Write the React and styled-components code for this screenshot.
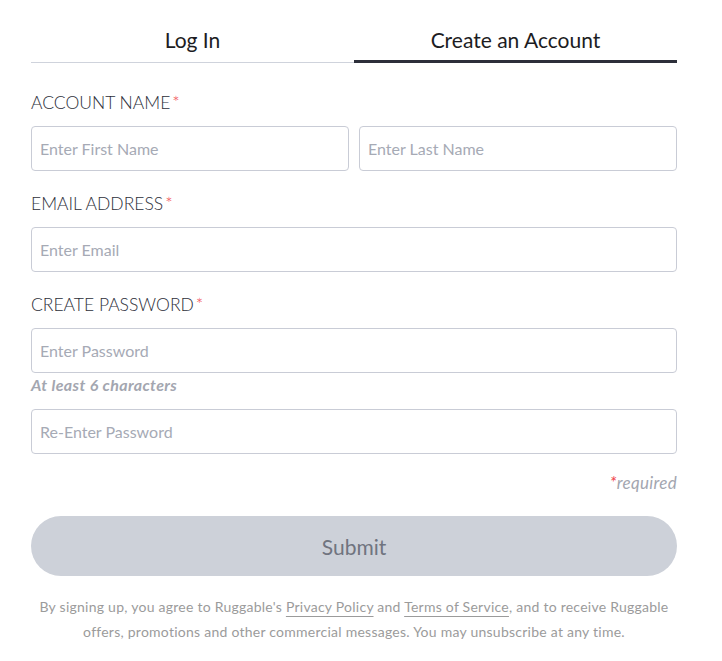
import styled, { createGlobalStyle } from "styled-components";

const GlobalStyle = createGlobalStyle`
  body {
    margin: 0;
    background: #fff;
    font-family: "Lato", "Noto Sans", sans-serif;
  }
`;

const Wrapper = styled.div`
  width: 646px;
  margin-left: 31px;
`;

const Tabs = styled.div`
  display: flex;
  align-items: flex-end;
  height: 63px;
`;

const Tab = styled.button`
  flex: 1;
  background: none;
  border: none;
  border-bottom: ${(p) => (p.active ? "3px solid #2d2f3a" : "1px solid #cfd3dc")};
  padding: 0 0 ${(p) => (p.active ? "8px" : "10px")};
  font-family: inherit;
  font-size: 21px;
  color: #1c1c22;
  cursor: pointer;
`;

const Label = styled.div`
  font-size: 17.5px;
  font-weight: 300;
  line-height: 24px;
  color: #2d2f3a;
  margin-top: ${(p) => p.top || 21}px;
  margin-bottom: 11px;
`;

const Star = styled.span`
  color: #f0454d;
  margin-left: 2px;
`;

const Row = styled.div`
  display: flex;
  gap: 10px;
`;

const Input = styled.input`
  box-sizing: border-box;
  width: 100%;
  height: 45px;
  border: 1px solid #c9ccd6;
  border-radius: 4px;
  padding: 0 8px;
  font-family: inherit;
  font-size: 16px;
  color: #2d2f3a;
  margin-top: ${(p) => p.top || 0}px;
  &::placeholder {
    color: #a6aab5;
  }
`;

const Hint = styled.div`
  font-size: 16px;
  font-style: italic;
  font-weight: 700;
  letter-spacing: 0.4px;
  line-height: 20px;
  color: #a3a6b0;
  margin-top: 2px;
`;

const Required = styled.div`
  text-align: right;
  font-size: 17px;
  font-style: italic;
  letter-spacing: 0.3px;
  line-height: 20px;
  color: #a3a6b0;
  margin-top: 19px;
`;

const Submit = styled.button`
  width: 100%;
  height: 60px;
  margin-top: 23px;
  border: none;
  border-radius: 30px;
  background: #cdd1d9;
  color: #70747f;
  font-family: inherit;
  font-size: 21px;
`;

const Legal = styled.p`
  margin: 18px 0 0;
  text-align: center;
  font-size: 14px;
  letter-spacing: 0.25px;
  line-height: 25px;
  color: #9b9b9b;
`;

const Link = styled.a`
  color: #9b9b9b;
  text-decoration: underline;
  text-underline-offset: 4px;
`;

export default function App() {
  return (
    <>
      <GlobalStyle />
      <Wrapper>
        <Tabs>
          <Tab>Log In</Tab>
          <Tab active>Create an Account</Tab>
        </Tabs>

        <Label top={28}>
          ACCOUNT NAME<Star>*</Star>
        </Label>
        <Row>
          <Input placeholder="Enter First Name" />
          <Input placeholder="Enter Last Name" />
        </Row>

        <Label>
          EMAIL ADDRESS<Star>*</Star>
        </Label>
        <Input placeholder="Enter Email" />

        <Label>
          CREATE PASSWORD<Star>*</Star>
        </Label>
        <Input type="password" placeholder="Enter Password" />
        <Hint>At least 6 characters</Hint>
        <Input type="password" placeholder="Re-Enter Password" top={14} />

        <Required>
          <Star>*</Star>required
        </Required>

        <Submit disabled>Submit</Submit>

        <Legal>
          By signing up, you agree to Ruggable's <Link>Privacy Policy</Link> and{" "}
          <Link>Terms of Service</Link>, and to receive Ruggable offers,
          promotions and other commercial messages. You may unsubscribe at any
          time.
        </Legal>
      </Wrapper>
    </>
  );
}
